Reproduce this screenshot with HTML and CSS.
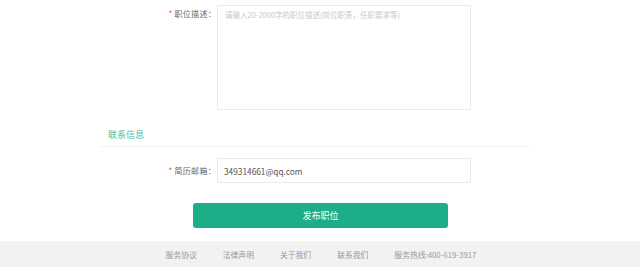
FILE: index.html
```html
<!DOCTYPE html>
<html lang="zh-CN">
<head>
    <meta charset="UTF-8">
    <meta name="viewport" content="width=device-width, initial-scale=1.0">
    <title>发布职位</title>
    <link rel="stylesheet" href="styles.css">
</head>
<body>
    <div class="main">
        <div class="form-row top">
            <label class="label" for="desc"><span class="req">*</span>职位描述：</label>
            <textarea id="desc" class="textarea" placeholder="请输入20-2000字的职位描述(岗位职责，任职要求等)"></textarea>
        </div>

        <div class="section-title">联系信息</div>

        <div class="form-row">
            <label class="label" for="email"><span class="req">*</span>简历邮箱：</label>
            <input id="email" class="input" type="text" value="349314661@qq.com">
        </div>

        <button class="submit-btn">发布职位</button>
    </div>

    <div class="footer">
        <a href="#">服务协议</a>
        <a href="#">法律声明</a>
        <a href="#">关于我们</a>
        <a href="#">联系我们</a>
        <span>服务热线:400-619-3917</span>
    </div>
</body>
</html>
```

FILE: styles.css
```css
body {
    margin: 0;
    background: #fff;
    font-family: "Noto Sans CJK SC", "Liberation Sans", sans-serif;
    color: #555;
}
.main {
    padding-top: 5px;
}
.form-row {
    display: flex;
    align-items: center;
}
.form-row.top {
    align-items: flex-start;
}
.label {
    width: 217px;
    box-sizing: border-box;
    padding-right: 1px;
    text-align: right;
    font-size: 8px;
    line-height: 18px;
    color: #666;
    letter-spacing: 0.3px;
}
.req {
    color: #e4393c;
    margin-right: 2px;
}
.textarea, .input {
    box-sizing: border-box;
    width: 254px;
    border: 1px solid #ebebeb;
    margin: 0;
    font-family: inherit;
    outline: none;
    padding: 0 7px;
    background: #fff;
}
.textarea {
    height: 105px;
    resize: none;
    padding-top: 3px;
    font-size: 7.5px;
    line-height: 12px;
}
.textarea::placeholder {
    color: #c8c8c8;
}
.input {
    height: 25px;
    padding-left: 6px;
    font-size: 8.3px;
    color: #555;
}
.section-title {
    margin: 18px 110px 0 100px;
    padding: 0 0 4px 8px;
    font-size: 9px;
    line-height: 14px;
    color: #4dbb96;
    border-bottom: 1px solid #f2f2f2;
}
.section-title + .form-row {
    margin-top: 11px;
}
.submit-btn {
    display: block;
    margin: 20px 0 0 193px;
    width: 255px;
    height: 25px;
    border: none;
    border-radius: 3px;
    background: #1bae88;
    color: #fff;
    font-family: inherit;
    font-size: 9px;
    cursor: pointer;
}
.footer {
    margin-top: 13px;
    height: 26px;
    background: #f2f2f2;
    display: flex;
    justify-content: center;
    align-items: center;
    gap: 26px;
    padding-left: 2px;
    font-size: 7.8px;
    color: #999;
}
.footer a {
    color: #999;
    text-decoration: none;
}
```
